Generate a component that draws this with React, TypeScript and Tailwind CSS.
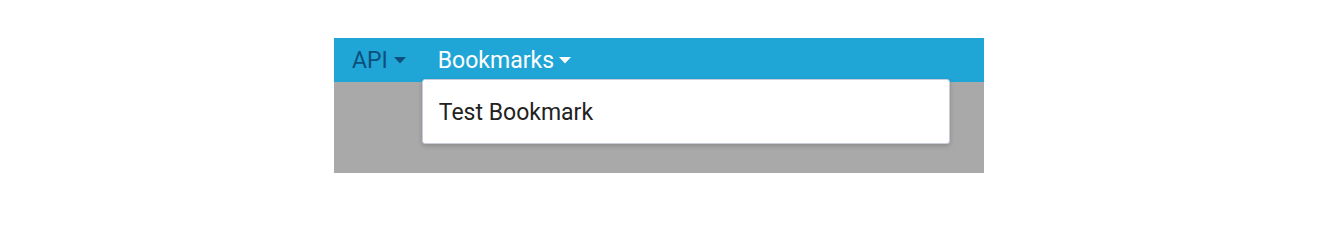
import React from 'react';

function Caret({ className }: { className?: string }) {
  return (
    <svg width="12" height="7" viewBox="0 0 12 7" className={className}>
      <path d="M0 0 L12 0 L6 6.5 Z" fill="currentColor" />
    </svg>
  );
}

export default function App() {
  return (
    <div className="min-h-[208px] w-full bg-white pt-[38px] flex justify-center" style={{ fontFamily: 'Roboto, "Noto Sans", sans-serif' }}>
      <div className="w-[650px] h-[135px] bg-[#a9a9a9] flex flex-col">
        {/* Top nav */}
        <nav className="h-[44px] bg-[#1fa5d6] flex items-center pl-[18px] text-[23px] leading-none">
          <div className="flex items-center text-[#0c4f7c]">
            <span>API</span>
            <Caret className="ml-[6px] mt-[1px]" />
          </div>
          <div className="relative ml-[16px] h-full flex items-center px-[16px] text-white">
            <span>Bookmarks</span>
            <Caret className="ml-[5px] mt-[1px]" />
            {/* Dropdown menu */}
            <div className="absolute left-0 top-[41px] w-[528px] h-[65px] bg-white border border-[#c8cbd8] rounded-[3px] shadow-[0_2px_5px_rgba(0,0,0,0.18)] flex items-center pl-[16px] pt-[2px]">
              <span className="text-[#222222] text-[23px]">Test Bookmark</span>
            </div>
          </div>
        </nav>
      </div>
    </div>
  );
}
